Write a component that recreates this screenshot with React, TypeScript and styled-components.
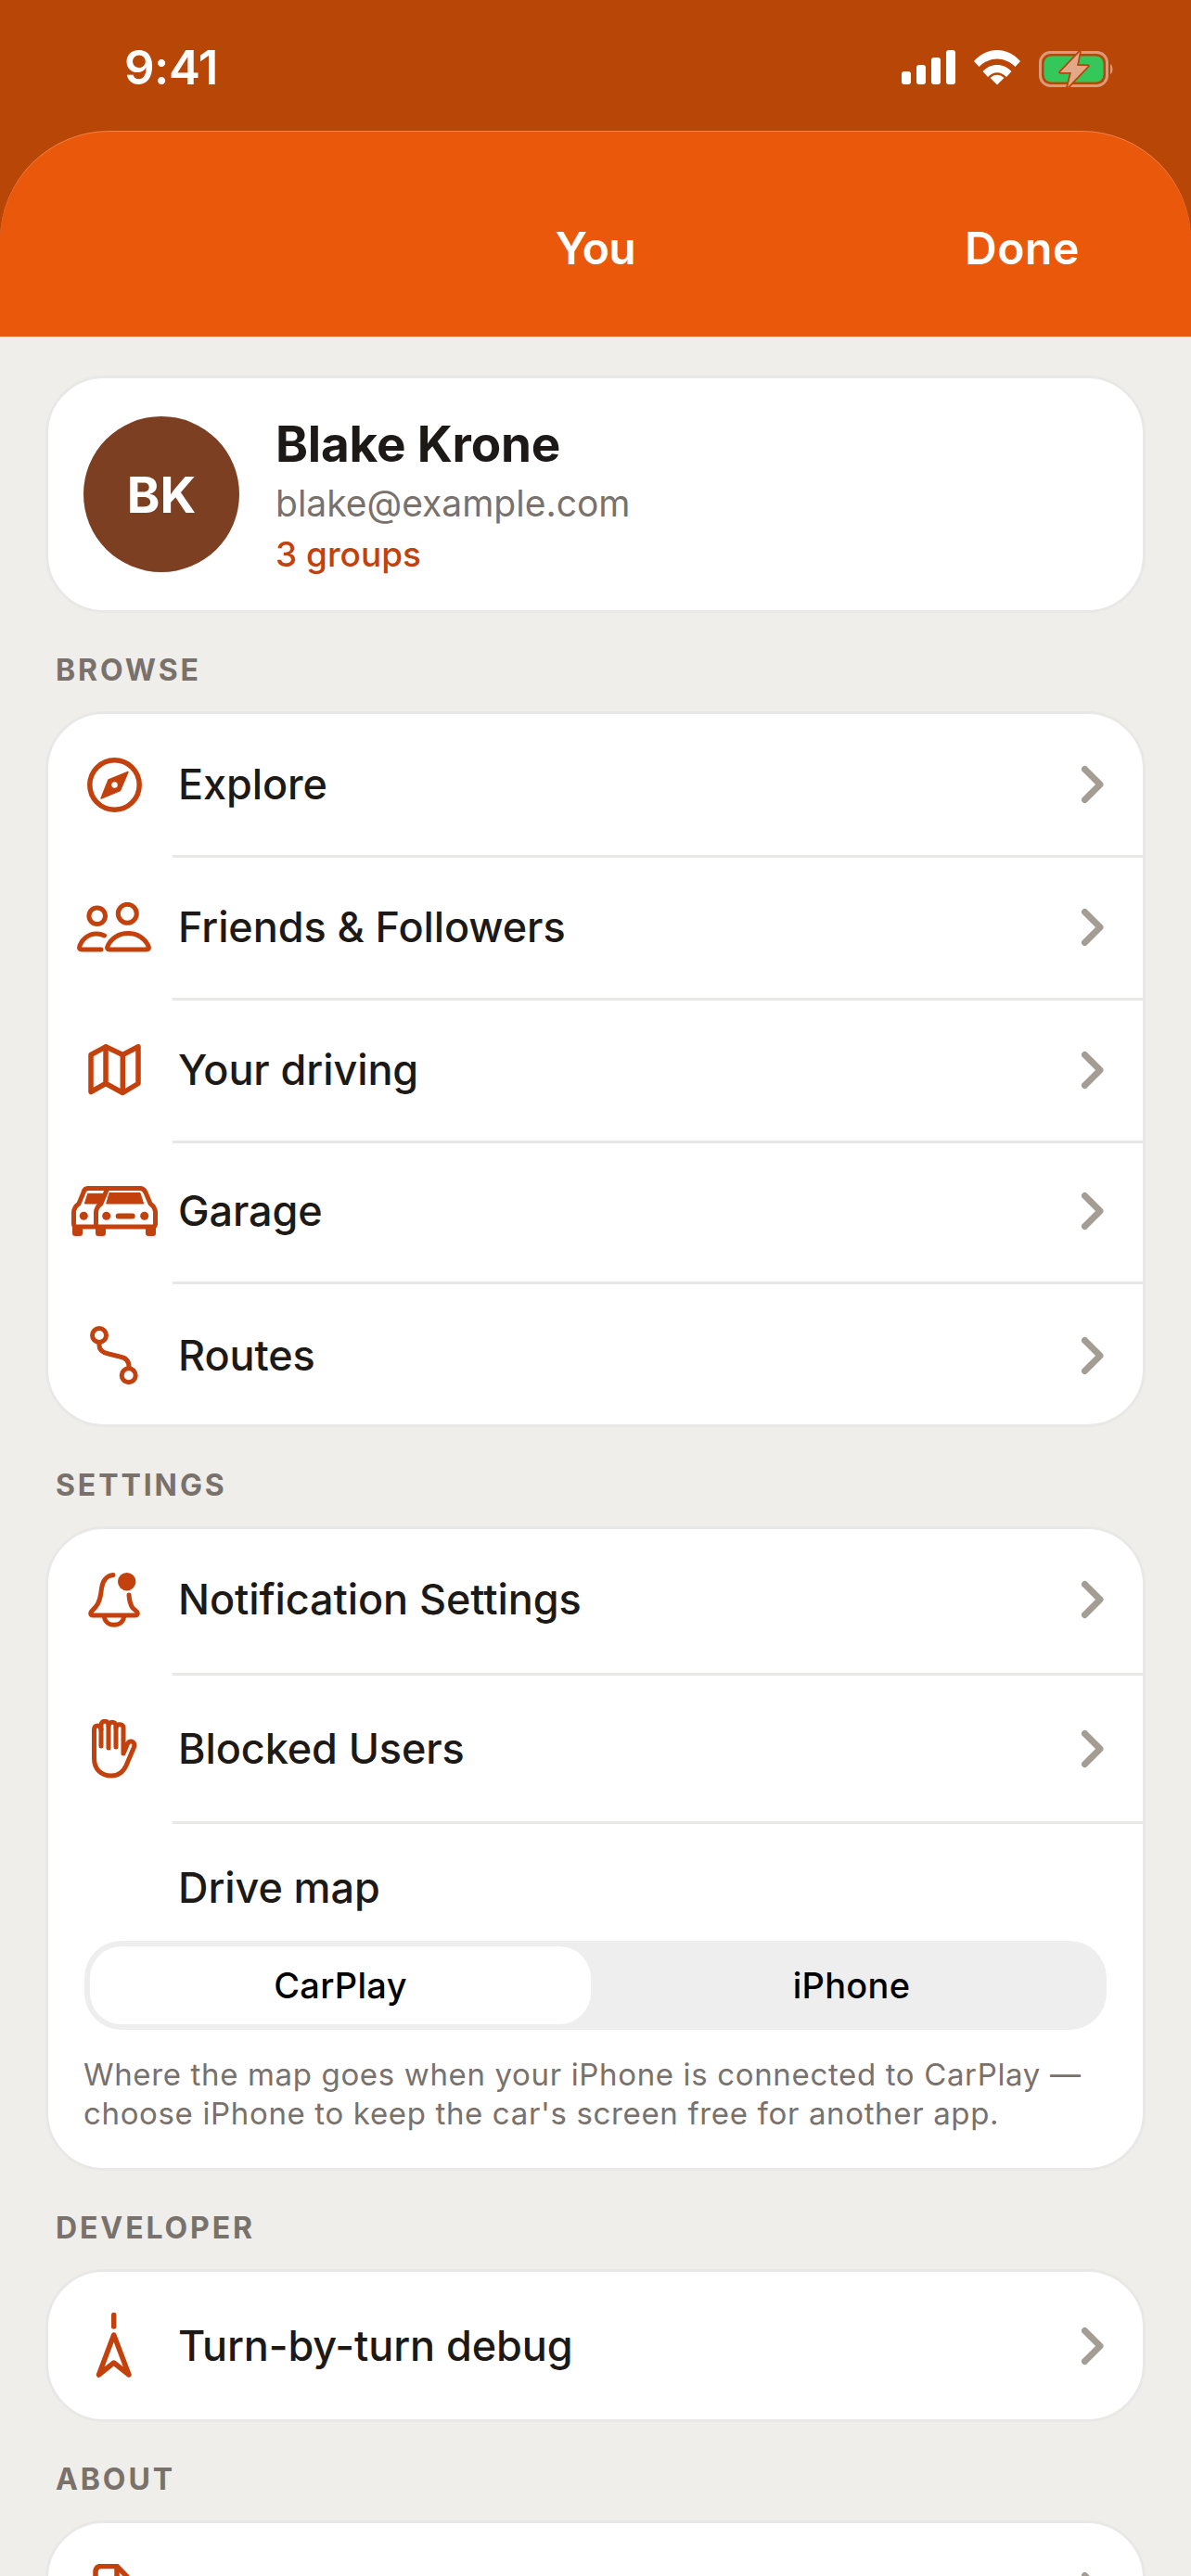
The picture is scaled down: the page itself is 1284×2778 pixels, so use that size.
import styled, { createGlobalStyle } from "styled-components";

const GlobalStyle = createGlobalStyle`
  html, body {
    margin: 0;
    padding: 0;
    background: #efeeea;
    font-family: Inter, "Noto Sans", sans-serif;
  }
  * {
    box-sizing: border-box;
  }
`;

const Screen = styled.div`
  width: 1284px;
  height: 2778px;
  overflow: hidden;
  background: #efeeea;
`;

const Top = styled.header`
  background: #b84607;
`;

const StatusBar = styled.div`
  height: 141px;
  display: flex;
  justify-content: space-between;
  padding: 53px 82px 0 134px;
`;

const Clock = styled.span`
  font-size: 51px;
  line-height: 40px;
  font-weight: 600;
  letter-spacing: -0.5px;
  color: #fff;
`;

const StatusIcons = styled.div`
  display: flex;
  align-items: flex-start;
  gap: 20px;
  padding-top: 1px;
`;

const Sheet = styled.div`
  height: 222px;
  display: grid;
  grid-template-columns: 1fr auto 1fr;
  align-items: center;
  padding: 32px 120px 0;
  background: #ea580c;
  border-radius: 118px 118px 0 0;
  box-shadow: inset 0 1px 0 rgba(255, 255, 255, 0.25);
`;

const SheetTitle = styled.h1`
  grid-column: 2;
  margin: 0;
  font-size: 48px;
  line-height: 60px;
  font-weight: 600;
  letter-spacing: -0.6px;
  color: #fff;
`;

const DoneButton = styled.button`
  grid-column: 3;
  justify-self: end;
  padding: 0;
  border: 0;
  background: none;
  font: 600 48px/60px Inter, sans-serif;
  letter-spacing: 0.6px;
  color: #fff;
`;

const Content = styled.main`
  padding: 42px 49px 0;
`;

const Card = styled.section`
  background: #fff;
  border: 3px solid #e8e8e6;
  border-radius: 63px;
`;

const ProfileBody = styled.div`
  height: 250px;
  display: flex;
  align-items: center;
  gap: 39px;
  padding-left: 38px;
`;

const Avatar = styled.div`
  width: 168px;
  height: 168px;
  display: flex;
  align-items: center;
  justify-content: center;
  border-radius: 50%;
  background: #7c3f22;
  font-size: 54px;
  font-weight: 700;
  color: #fff;
`;

const ProfileText = styled.div`
  display: flex;
  flex-direction: column;
  padding-top: 2px;
`;

const Name = styled.div`
  font-size: 53px;
  line-height: 62px;
  font-weight: 700;
  letter-spacing: -0.2px;
  color: #1c1917;
`;

const Email = styled.div`
  margin-top: 8px;
  font-size: 39px;
  line-height: 50px;
  color: #78716c;
`;

const Groups = styled.div`
  margin-top: 7px;
  font-size: 37px;
  line-height: 46px;
  font-weight: 500;
  color: #c2410c;
`;

const SectionLabel = styled.h2<{ $top?: number }>`
  margin: ${(p) => p.$top ?? 42}px 0 24px 11px;
  font-size: 32px;
  line-height: 40px;
  font-weight: 700;
  letter-spacing: 2.9px;
  color: #78716c;
`;

const Row = styled.div<{ $h: number; $nudge?: number }>`
  height: ${(p) => p.$h}px;
  display: flex;
  align-items: center;
  padding: ${(p) => Math.max(0, -(p.$nudge ?? 0))}px 42px ${(p) => Math.max(0, p.$nudge ?? 0)}px 23px;
`;

const IconSlot = styled.div`
  width: 96px;
  flex: none;
  display: flex;
  align-items: center;
  justify-content: center;
  color: #c2410c;
  svg {
    display: block;
  }
`;

const RowLabel = styled.span`
  flex: 1;
  margin-left: 21px;
  font-size: 45px;
  line-height: 56px;
  font-weight: 550;
  letter-spacing: -0.1px;
  color: #1c1917;
`;

const Divider = styled.div`
  height: 3px;
  margin: 0 -3px 0 134px;
  background: #e8e8e6;
`;

const DriveMap = styled.div`
  padding: 42px 39px 0;
`;

const DriveTitle = styled.div`
  margin-left: 101px;
  font-size: 45px;
  line-height: 54px;
  font-weight: 550;
  letter-spacing: -0.1px;
  color: #1c1917;
`;

const Segments = styled.div`
  height: 96px;
  display: grid;
  grid-template-columns: 540px 1fr;
  gap: 12px;
  margin-top: 30px;
  padding: 6px;
  border-radius: 40px;
  background: #eeeeee;
`;

const Segment = styled.div<{ $active?: boolean }>`
  display: flex;
  align-items: center;
  justify-content: center;
  border-radius: 34px;
  background: ${(p) => (p.$active ? "#fff" : "transparent")};
  font-size: 38px;
  font-weight: 500;
  letter-spacing: 0.3px;
  color: #000;
`;

const Hint = styled.p`
  margin: 27px 0 38px -1px;
  font-size: 33px;
  line-height: 42px;
  letter-spacing: 0.65px;
  color: #78716c;
`;

function Chevron() {
  return (
    <svg width="24" height="42" viewBox="0 0 24 42" fill="none" stroke="#a39d94" strokeWidth="7" strokeLinecap="round" strokeLinejoin="round">
      <path d="M3.5 4.5L20 21L3.5 37.5" />
    </svg>
  );
}

function SignalIcon() {
  return (
    <svg width="58" height="38" viewBox="0 0 58 38" fill="#fff">
      <rect x="0" y="23" width="10" height="14" rx="3" />
      <rect x="16" y="16" width="10" height="21" rx="3" />
      <rect x="32" y="8" width="10" height="29" rx="3" />
      <rect x="48" y="0" width="10" height="37" rx="3" />
    </svg>
  );
}

function WifiIcon() {
  return (
    <svg width="50" height="38" viewBox="0 0 50 38" fill="#fff">
      <path d="M0 12C14 -4 36 -4 50 12L44.5 18C33 6.5 17 6.5 5.5 18Z" />
      <path d="M9.5 23C18 13.5 32 13.5 40.5 23L35 29C29 22.5 21 22.5 15 29Z" />
      <path d="M25 37.5L17.5 30C22 25.5 28 25.5 32.5 30Z" />
    </svg>
  );
}

function BatteryIcon() {
  return (
    <svg width="82" height="42" viewBox="0 0 82 42">
      <rect x="1.5" y="2.5" width="72" height="36" rx="11" fill="none" stroke="#dd9a78" strokeWidth="3" />
      <rect x="5.5" y="6.5" width="64" height="28" rx="8" fill="#34c759" />
      <path d="M77 15C80 16 80.5 25 77 26Z" fill="#dd9a78" />
      <path d="M44 2L23 24H35L31 40L53 17H41Z" fill="#e2a88a" stroke="#b84607" strokeWidth="3.5" strokeLinejoin="round" paintOrder="stroke" />
    </svg>
  );
}

function CompassIcon() {
  return (
    <svg width="59" height="59" viewBox="0 0 59 59" fill="none">
      <circle cx="29.5" cy="29.5" r="26.7" stroke="currentColor" strokeWidth="5.5" />
      <path
        fillRule="evenodd"
        fill="currentColor"
        d="M44 15.5L35.5 35.5L15 44L23 24ZM29.5 25.5a4 4 0 1 0 0 8a4 4 0 1 0 0-8Z"
        stroke="currentColor"
        strokeWidth="1.5"
        strokeLinejoin="round"
      />
    </svg>
  );
}

function FriendsIcon() {
  return (
    <svg width="80" height="54" viewBox="0 0 80 54" fill="none" stroke="currentColor" strokeWidth="5" strokeLinecap="round" strokeLinejoin="round">
      <circle cx="21.7" cy="14.7" r="8.8" />
      <circle cx="54.3" cy="12.3" r="10" />
      <path d="M35 51H75C77 51 78 49.5 77 47.5C73.5 39 65 33.5 55 33.5C45 33.5 36.5 39 33 47.5C32 49.5 33 51 35 51Z" />
      <path d="M26 51H5C3 51 2.2 49.5 2.7 48C5 39.5 13 34 21 34C24 34 26.5 34.5 29.5 36" />
    </svg>
  );
}

function MapIcon() {
  return (
    <svg width="59" height="56" viewBox="0 0 59 56" fill="none" stroke="currentColor" strokeWidth="5.5" strokeLinecap="round" strokeLinejoin="round">
      <path d="M4 11.5L20 2.8L38.3 11.5L55 2.8V42.5L38.3 52.5L20 42.5L4 51.5Z" />
      <path d="M20 3V42.5" />
      <path d="M38.3 11.5V52" />
    </svg>
  );
}

function GarageIcon() {
  return (
    <svg width="93" height="54" viewBox="0 0 93 54" fill="none">
      <path d="M41 2.5H17.7Q14 2.5 13 7L8 19Q2.5 23 2.5 29V41Q2.5 44 6 44H28" stroke="currentColor" strokeWidth="5" />
      <path d="M14.3 19L17.7 8.3H36L32.7 19Z" fill="currentColor" stroke="currentColor" strokeWidth="1" strokeLinejoin="round" />
      <circle cx="13.3" cy="32.3" r="4.5" fill="currentColor" />
      <rect x="1" y="42" width="11" height="12" rx="3" fill="currentColor" />
      <path
        d="M41 2.5H74Q78 2.5 80 7L85 19Q90.5 23 90.5 29V41Q90.5 44 87 44H30Q26.5 44 26.5 41V29Q26.5 23 32 19L37 7Q38 2.5 41 2.5Z"
        fill="#fff"
        stroke="currentColor"
        strokeWidth="5"
      />
      <path d="M37.7 19L41 7.5H74L77.7 19Z" fill="currentColor" stroke="currentColor" strokeWidth="1" strokeLinejoin="round" />
      <circle cx="37.7" cy="32.3" r="4.5" fill="currentColor" />
      <circle cx="78.7" cy="32.3" r="4.5" fill="currentColor" />
      <rect x="47.7" y="29.5" width="21" height="6" rx="3" fill="currentColor" />
      <rect x="26" y="42" width="11" height="12" rx="3" fill="currentColor" />
      <rect x="80" y="42" width="11" height="12" rx="3" fill="currentColor" />
    </svg>
  );
}

function RoutesIcon() {
  return (
    <svg width="52" height="64" viewBox="0 0 52 64" fill="none" stroke="currentColor" strokeWidth="5" strokeLinecap="round">
      <circle cx="10" cy="10" r="7.5" />
      <circle cx="41.7" cy="53.3" r="7.5" />
      <path d="M10 18V21C10 27 15 29 20 30L32 33C38 34 42 37 42 44" />
    </svg>
  );
}

function BellIcon() {
  return (
    <svg width="56" height="60" viewBox="0 0 56 60" fill="none" stroke="currentColor" strokeWidth="5" strokeLinecap="round" strokeLinejoin="round">
      <path d="M27 3.5C20 4 15.5 10 14.5 18C13.5 28 12 34 8 38L3.5 43C2 45 3 47 5 47H51C53 47 54 45 52.5 43L48 39C45 35 44.5 31 44 25" />
      <path d="M17.5 49C19 60 37 60 38.5 49" />
      <circle cx="41.7" cy="10.7" r="9.7" fill="currentColor" stroke="none" />
    </svg>
  );
}

function HandIcon() {
  return (
    <svg width="49" height="64" viewBox="0 0 49 64" fill="none" stroke="currentColor" strokeWidth="5" strokeLinecap="round" strokeLinejoin="round">
      <path d="M2.5 36V11C2.5 5.5 10 5.5 10 11V29" />
      <path d="M10 11V6C10 1 18 1 18 6V31" />
      <path d="M18 7C18 2 26 2 26 7V30" />
      <path d="M26 9C26 4.5 34 4.5 34 9V37L38.5 26.5C41 21.5 47.5 24.5 45.5 30L37 50C33.5 57.5 29 61 21 61C10 61 2.5 54 2.5 42V34" />
    </svg>
  );
}

function NavIcon() {
  return (
    <svg width="40" height="71" viewBox="0 0 40 71" fill="none" stroke="currentColor" strokeWidth="5.5" strokeLinecap="round" strokeLinejoin="round">
      <path d="M19.7 2.5V15" />
      <path d="M19.7 24L36 67L19.7 54L3.5 67Z" />
    </svg>
  );
}

function DocIcon() {
  return (
    <svg width="46" height="58" viewBox="0 0 46 58" fill="none" stroke="currentColor" strokeWidth="5.5" strokeLinejoin="round">
      <path d="M3 58V9Q3 2.5 9 2.5H26L43 20V58" />
      <path d="M26 2.5V20H43" />
    </svg>
  );
}

const browseRows = [
  { label: "Explore", icon: <CompassIcon />, h: 152, nudge: 0 },
  { label: "Friends & Followers", icon: <FriendsIcon />, h: 151, nudge: 2 },
  { label: "Your driving", icon: <MapIcon />, h: 151, nudge: 2 },
  { label: "Garage", icon: <GarageIcon />, h: 149, nudge: 3 },
  { label: "Routes", icon: <RoutesIcon />, h: 151, nudge: -2 },
];

export default function App() {
  return (
    <Screen>
      <GlobalStyle />
      <Top>
        <StatusBar>
          <Clock>9:41</Clock>
          <StatusIcons>
            <SignalIcon />
            <WifiIcon />
            <BatteryIcon />
          </StatusIcons>
        </StatusBar>
        <Sheet>
          <SheetTitle>You</SheetTitle>
          <DoneButton>Done</DoneButton>
        </Sheet>
      </Top>
      <Content>
        <Card>
          <ProfileBody>
            <Avatar>BK</Avatar>
            <ProfileText>
              <Name>Blake Krone</Name>
              <Email>blake@example.com</Email>
              <Groups>3 groups</Groups>
            </ProfileText>
          </ProfileBody>
        </Card>

        <SectionLabel>BROWSE</SectionLabel>
        <Card>
          {browseRows.map((row, i) => (
            <div key={row.label}>
              {i > 0 && <Divider />}
              <Row $h={row.h} $nudge={row.nudge}>
                <IconSlot>{row.icon}</IconSlot>
                <RowLabel>{row.label}</RowLabel>
                <Chevron />
              </Row>
            </div>
          ))}
        </Card>

        <SectionLabel $top={43}>SETTINGS</SectionLabel>
        <Card>
          <Row $h={155} $nudge={4}>
            <IconSlot>
              <BellIcon />
            </IconSlot>
            <RowLabel>Notification Settings</RowLabel>
            <Chevron />
          </Row>
          <Divider />
          <Row $h={157}>
            <IconSlot>
              <HandIcon />
            </IconSlot>
            <RowLabel>Blocked Users</RowLabel>
            <Chevron />
          </Row>
          <Divider />
          <DriveMap>
            <DriveTitle>Drive map</DriveTitle>
            <Segments>
              <Segment $active>CarPlay</Segment>
              <Segment>iPhone</Segment>
            </Segments>
            <Hint>Where the map goes when your iPhone is connected to CarPlay — choose iPhone to keep the car's screen free for another app.</Hint>
          </DriveMap>
        </Card>

        <SectionLabel>DEVELOPER</SectionLabel>
        <Card>
          <Row $h={159}>
            <IconSlot>
              <NavIcon />
            </IconSlot>
            <RowLabel>Turn-by-turn debug</RowLabel>
            <Chevron />
          </Row>
        </Card>

        <SectionLabel>ABOUT</SectionLabel>
        <Card>
          <Row $h={146}>
            <IconSlot>
              <DocIcon />
            </IconSlot>
            <RowLabel />
            <Chevron />
          </Row>
        </Card>
      </Content>
    </Screen>
  );
}
